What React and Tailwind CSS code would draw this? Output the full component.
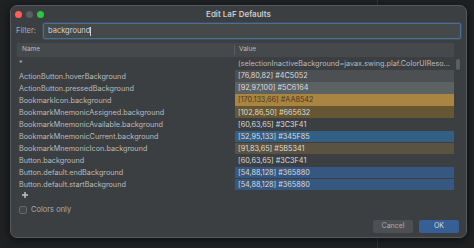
import React from 'react';

const rows = [
  { name: '*', value: '(selectionInactiveBackground=javax.swing.plaf.ColorUIReso...', bg: null },
  { name: 'ActionButton.hoverBackground', value: '[76,80,82] #4C5052', bg: '#4C5052' },
  { name: 'ActionButton.pressedBackground', value: '[92,97,100] #5C6164', bg: '#5C6164' },
  { name: 'BookmarkIcon.background', value: '[170,133,66] #AA8542', bg: '#AA8542', dark: true },
  { name: 'BookmarkMnemonicAssigned.background', value: '[102,86,50] #665632', bg: '#665632' },
  { name: 'BookmarkMnemonicAvailable.background', value: '[60,63,65] #3C3F41', bg: '#3C3F41' },
  { name: 'BookmarkMnemonicCurrent.background', value: '[52,95,133] #345F85', bg: '#345F85' },
  { name: 'BookmarkMnemonicIcon.background', value: '[91,83,65] #5B5341', bg: '#5B5341' },
  { name: 'Button.background', value: '[60,63,65] #3C3F41', bg: '#3C3F41' },
  { name: 'Button.default.endBackground', value: '[54,88,128] #365880', bg: '#365880' },
  { name: 'Button.default.startBackground', value: '[54,88,128] #365880', bg: '#365880' },
];

export default function App() {
  return (
    <div className="relative w-[474px] h-[248px] overflow-hidden bg-[#202123] pt-[5px] pl-[10px] font-['Inter','Noto_Sans',sans-serif]">
      {/* background IDE split line */}
      <div className="absolute left-[377px] top-0 h-full w-px bg-[#34363a]" />

      <div className="relative flex flex-col w-[457px] h-[233px] rounded-[7px] bg-[#3c3f41] border border-[#56595b] shadow-[0_2px_10px_rgba(0,0,0,0.6)]">
        {/* Title bar */}
        <div className="relative flex items-center h-[16px] pl-[4px]">
          <div className="flex gap-[4px]">
            <span className="w-[7px] h-[7px] rounded-full bg-[#fe5f57]" />
            <span className="w-[7px] h-[7px] rounded-full bg-[#5b5e60]" />
            <span className="w-[7px] h-[7px] rounded-full bg-[#28c840]" />
          </div>
          <div className="absolute inset-0 flex items-center justify-center text-[8px] font-semibold text-[#c9cacb]">
            Edit LaF Defaults
          </div>
        </div>

        {/* Filter */}
        <div className="flex items-center h-[16px] mt-[1px] pl-[5px]">
          <span className="w-[27px] text-[7.5px] text-[#a9abad]">Filter:</span>
          <div className="flex items-center w-[418px] h-[16px] rounded-[2px] border border-[#4b6e93] bg-[#45494a] px-[4px] text-[7.5px] text-[#d2d3d4] shadow-[0_0_0_1px_rgba(70,110,150,0.35)]">
            background<span className="w-px h-[9px] bg-[#d0d0d0]" />
          </div>
        </div>

        {/* Table */}
        <div className="flex mt-[4px] ml-[6px]">
          <div className="w-[437px]">
            <div className="flex h-[14px] items-center bg-[#46494b] text-[6.5px] text-[#b9bbbd]">
              <div className="w-[218px] pl-[5px] border-r border-[#5a5d5f]">Name</div>
              <div className="pl-[4px]">Value</div>
            </div>
            <div className="pt-[1px]">
              {rows.map((r) => (
                <div key={r.name} className="flex h-[12.1px] text-[7.25px] leading-none">
                  <div className="w-[218px] pl-[2px] flex items-center text-[#b9bbbd] whitespace-nowrap">
                    {r.name}
                  </div>
                  <div
                    className={`flex-1 flex items-center pl-[3px] mb-[0.6px] whitespace-nowrap overflow-hidden ${r.dark ? 'text-[#4a3918]' : r.bg ? 'text-[#dcdcdc]' : 'text-[#b9bbbd]'}`}
                    style={r.bg ? { background: r.bg } : undefined}
                  >
                    {r.value}
                  </div>
                </div>
              ))}
            </div>
          </div>
          <div className="w-[8px] pl-[2px] pt-[16px]">
            <div className="w-[4px] h-[11px] rounded-full bg-[#5c5f61]" />
          </div>
        </div>

        {/* Add */}
        <svg className="ml-[11px] mt-[1px]" width="6" height="6" viewBox="0 0 6 6">
          <path d="M3 0V6M0 3H6" stroke="#c4c5c6" strokeWidth="1.4" />
        </svg>

        {/* Checkbox */}
        <div className="flex items-center gap-[4px] ml-[8px] mt-[6px]">
          <span className="w-[8px] h-[8px] rounded-[2px] border border-[#65686a] bg-[#434648]" />
          <span className="text-[7.5px] text-[#a9abad]">Colors only</span>
        </div>

        {/* Buttons */}
        <div className="flex justify-end gap-[6px] mt-auto mb-[4px] mr-[7px]">
          <button className="w-[40px] h-[13px] rounded-[2px] bg-[#4c5052] text-[7px] text-[#a9abad]">Cancel</button>
          <button className="w-[40px] h-[13px] rounded-[2px] bg-[#365f95] text-[7px] text-[#d6dbe2]">OK</button>
        </div>
      </div>
    </div>
  );
}
